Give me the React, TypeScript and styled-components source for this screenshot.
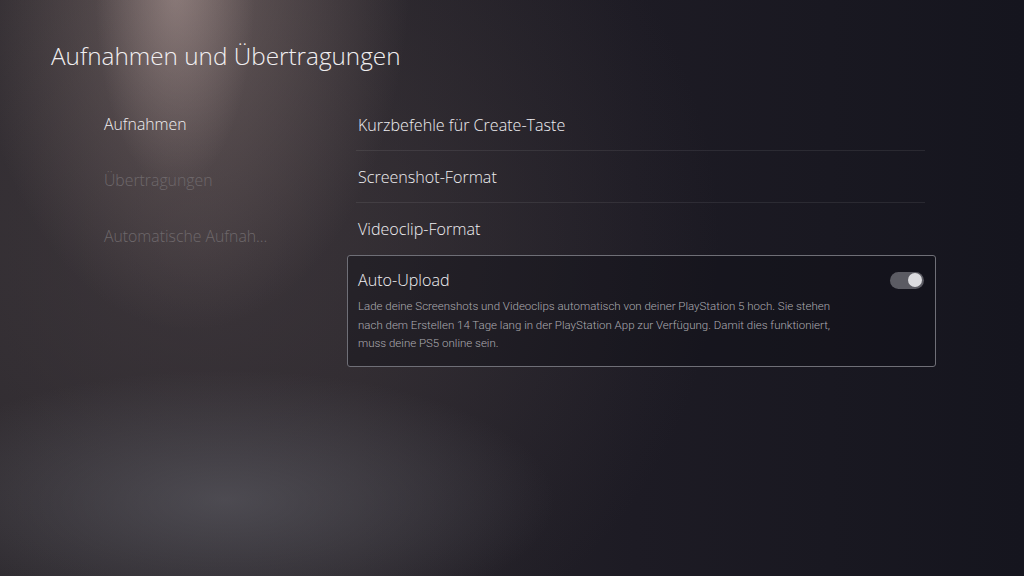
import React from 'react';
import styled, { createGlobalStyle } from 'styled-components';

const GlobalStyle = createGlobalStyle`
  html, body {
    margin: 0;
    padding: 0;
    width: 1024px;
    height: 576px;
    overflow: hidden;
    background: #16161f;
  }
  * { box-sizing: border-box; }
`;

const Screen = styled.div`
  width: 1024px;
  height: 576px;
  font-family: 'Open Sans', 'Noto Sans', sans-serif;
  color: #ecebee;
  background:
    radial-gradient(ellipse 80px 200px at 175px -10px, rgba(195, 172, 168, 0.4), rgba(195, 172, 168, 0) 100%),
    radial-gradient(ellipse 220px 360px at 190px -30px, rgba(150, 130, 126, 0.55), rgba(150, 130, 126, 0) 100%),
    radial-gradient(ellipse 330px 130px at 225px 500px, rgba(100, 100, 108, 0.55), rgba(100, 100, 108, 0) 100%),
    radial-gradient(ellipse 520px 480px at 200px 240px, rgba(80, 70, 74, 0.5), rgba(80, 70, 74, 0) 100%),
    linear-gradient(90deg, #29262b 0%, #262329 35%, #1d1b24 62%, #15151e 100%);
  padding: 40px 0 0 51px;
`;

const Title = styled.h1`
  margin: 0;
  font-size: 24.3px;
  font-weight: 300;
  line-height: 32px;
  color: #f1eff1;
`;

const Body = styled.div`
  display: flex;
  align-items: flex-start;
  margin-top: 24px;
`;

const Nav = styled.nav`
  width: 254px;
  padding-left: 53px;
  display: flex;
  flex-direction: column;
`;

const NavItem = styled.div<{ $active?: boolean }>`
  height: 56px;
  display: flex;
  align-items: center;
  font-size: 15.8px;
  font-weight: 300;
  color: ${({ $active }) => ($active ? '#f0eef0' : '#6e686b')};
  white-space: nowrap;
`;

const List = styled.div`
  width: 589px;
  margin: 3px 0 0 42px;
  display: flex;
  flex-direction: column;
`;

const Row = styled.div<{ $last?: boolean }>`
  height: 52px;
  display: flex;
  align-items: center;
  margin: 0 11px 0 9px;
  padding-left: 2px;
  font-size: 16.1px;
  font-weight: 300;
  color: #efeef1;
  border-bottom: ${({ $last }) => ($last ? 'none' : '1px solid rgba(255, 255, 255, 0.08)')};
`;

const Card = styled.div`
  height: 112px;
  border: 1.5px solid #6f6f77;
  border-radius: 3px;
  background: rgba(14, 14, 22, 0.4);
  padding: 13px 11px 0 10px;
`;

const CardHead = styled.div`
  display: flex;
  justify-content: space-between;
  align-items: center;
  height: 22px;
`;

const CardTitle = styled.div`
  font-size: 16.1px;
  font-weight: 300;
  color: #f1f0f3;
`;

const Toggle = styled.div`
  width: 34px;
  height: 17px;
  border-radius: 9px;
  background: #5b5b63;
  position: relative;

  &::after {
    content: '';
    position: absolute;
    right: 2px;
    top: 1.5px;
    width: 14px;
    height: 14px;
    border-radius: 50%;
    background: #dcdce0;
  }
`;

const Desc = styled.p`
  margin: 6px 0 0;
  font-family: Roboto, 'Open Sans', sans-serif;
  font-size: 11.5px;
  font-weight: 300;
  line-height: 18.5px;
  color: #abaab0;
`;

const App: React.FC = () => {
  return (
    <>
      <GlobalStyle />
      <Screen>
        <Title>Aufnahmen und Übertragungen</Title>
        <Body>
          <Nav>
            <NavItem $active>Aufnahmen</NavItem>
            <NavItem>Übertragungen</NavItem>
            <NavItem>Automatische Aufnah...</NavItem>
          </Nav>
          <List>
            <Row>Kurzbefehle für Create-Taste</Row>
            <Row>Screenshot-Format</Row>
            <Row $last>Videoclip-Format</Row>
            <Card>
              <CardHead>
                <CardTitle>Auto-Upload</CardTitle>
                <Toggle />
              </CardHead>
              <Desc>
                Lade deine Screenshots und Videoclips automatisch von deiner PlayStation 5 hoch. Sie stehen
                <br />
                nach dem Erstellen 14 Tage lang in der PlayStation App zur Verfügung. Damit dies funktioniert,
                <br />
                muss deine PS5 online sein.
              </Desc>
            </Card>
          </List>
        </Body>
      </Screen>
    </>
  );
};

export default App;
